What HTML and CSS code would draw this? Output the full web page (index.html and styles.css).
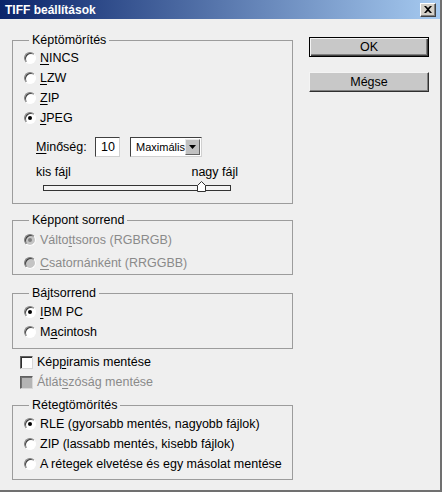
FILE: index.html
```html
<!DOCTYPE html>
<html lang="hu">
<head>
<meta charset="utf-8">
<title>TIFF beállítások</title>
<link rel="stylesheet" href="styles.css">
</head>
<body>
<div class="window">
  <div class="titlebar">
    <span class="title">TIFF beállítások</span>
    <span class="close"><svg width="8" height="7" viewBox="0 0 8 7"><path d="M0 0h2l2 2 2-2h2L5 3.5 8 7H6L4 5 2 7H0l3-3.5z" fill="#000"/></svg></span>
  </div>
  <div class="content">
    <div class="left">
      <fieldset class="group g1">
        <legend>Képtömörítés</legend>
        <div class="row"><span class="radio"></span><span><u>N</u>INCS</span></div>
        <div class="row"><span class="radio"></span><span><u>L</u>ZW</span></div>
        <div class="row"><span class="radio"></span><span><u>Z</u>IP</span></div>
        <div class="row"><span class="radio checked"></span><span><u>J</u>PEG</span></div>
        <div class="quality">
          <span class="qlabel"><u>M</u>inőség:</span>
          <span class="input">10</span>
          <span class="select"><span class="sel-text">Maximális</span><span class="sel-btn"><svg width="7" height="4" viewBox="0 0 7 4"><path d="M0 0h7L3.5 4z" fill="#000"/></svg></span></span>
        </div>
        <div class="scale"><span>kis fájl</span><span>nagy fájl</span></div>
        <div class="slider">
          <div class="track"></div>
          <svg class="thumb" width="9" height="11" viewBox="0 0 9 11"><path d="M0.5 4.5L4.5 0.5 8.5 4.5V10.5H0.5Z" fill="#fff" stroke="#333"/></svg>
        </div>
      </fieldset>

      <fieldset class="group g2 disabled">
        <legend>Képpont sorrend</legend>
        <div class="row tall"><span class="radio checked"></span><span>Válto<u>t</u>tsoros (RGBRGB)</span></div>
        <div class="row tall"><span class="radio"></span><span><u>C</u>satornánként (RRGGBB)</span></div>
      </fieldset>

      <fieldset class="group g3">
        <legend>Bájtsorrend</legend>
        <div class="row"><span class="radio checked"></span><span><u>I</u>BM PC</span></div>
        <div class="row"><span class="radio"></span><span>M<u>a</u>cintosh</span></div>
      </fieldset>

      <div class="checks">
        <div class="row"><span class="check"></span><span>Kép<u>p</u>iramis mentése</span></div>
        <div class="row disabled"><span class="check"></span><span>Átlát<u>s</u>zóság mentése</span></div>
      </div>

      <fieldset class="group g4">
        <legend>Rétegtömörítés</legend>
        <div class="row"><span class="radio checked"></span><span>RLE (gyorsabb mentés, nagyobb fájlok)</span></div>
        <div class="row"><span class="radio"></span><span>ZIP (lassabb mentés, kisebb fájlok)</span></div>
        <div class="row"><span class="radio"></span><span>A rétegek elvetése és egy másolat mentése</span></div>
      </fieldset>
    </div>
    <div class="buttons">
      <span class="btn default">OK</span>
      <span class="btn">Mégse</span>
    </div>
  </div>
</div>
</body>
</html>
```

FILE: styles.css
```css
html, body {
  margin: 0;
  padding: 0;
  background: #efefef;
}
.window {
  width: 442px;
  height: 492px;
  box-sizing: border-box;
  background: #efefef;
  border-right: 2px solid #707070;
  border-bottom: 2px solid #707070;
  font-family: "Liberation Sans", Arial, sans-serif;
  font-size: 12.5px;
  color: #000;
  display: flex;
  flex-direction: column;
}
u { text-decoration: underline; text-underline-offset: 2px; }
.titlebar {
  height: 19px;
  flex: none;
  display: flex;
  align-items: center;
  background: linear-gradient(to right, #0a246a, #a6caf0);
  color: #fff;
}
.title {
  font-weight: bold;
  font-size: 12px;
  margin-left: 5px;
  line-height: 14px;
}
.close {
  margin-left: auto;
  margin-right: 4px;
  width: 16px;
  height: 14px;
  box-sizing: border-box;
  background: #d4d0c8;
  border: 1px solid;
  border-color: #fff #404040 #404040 #fff;
  box-shadow: inset -1px -1px 0 #808080;
  display: flex;
  align-items: center;
  justify-content: center;
}
.close svg { display: block; margin-top: -1px; margin-left: -1px; }
.content {
  display: flex;
  padding: 14px 0 0 12px;
}
.left {
  display: flex;
  flex-direction: column;
  width: 281px;
}
.group {
  margin: 0;
  width: 281px;
  box-sizing: border-box;
  min-inline-size: 0;
  border: 1px solid #9c9c9c;
  padding: 1px 10px 0 11px;
}
.group legend {
  margin-left: 5px;
  padding: 0 3px;
  line-height: 14px;
  height: 14px;
}
.g1 { padding-bottom: 11px; }
.g2 { margin-top: 9px; padding-bottom: 0; }
.g3 { margin-top: 11px; padding-top: 2px; padding-bottom: 6px; }
.g4 { margin-top: 6px; padding-top: 2px; padding-bottom: 5px; }
.row {
  display: flex;
  align-items: center;
  height: 20px;
  gap: 4px;
  white-space: nowrap;
}
.row.tall { height: 23px; }
.radio {
  position: relative;
  width: 12px;
  height: 12px;
  box-sizing: border-box;
  border-radius: 50%;
  border: 1px solid;
  border-color: #808080 #fff #fff #808080;
  background: #fff;
  box-shadow: inset 1px 1px 0 #404040;
  flex: none;
}
.radio.checked::after {
  content: "";
  position: absolute;
  left: 3px;
  top: 3px;
  width: 4px;
  height: 4px;
  border-radius: 50%;
  background: #000;
}
.disabled .row { color: #8a8a8a; }
.disabled .radio { background: #c4c4c4; }
.disabled .radio.checked::after { background: #808080; }
.quality {
  display: flex;
  align-items: center;
  margin-top: 9px;
  padding-left: 12px;
  height: 20px;
}
.qlabel { width: 59px; }
.input {
  width: 25px;
  height: 20px;
  box-sizing: border-box;
  background: #fff;
  border: 1px solid;
  border-color: #404040 #d0d0d0 #d0d0d0 #404040;
  padding-left: 5px;
  line-height: 18px;
}
.select {
  margin-left: 10px;
  width: 72px;
  height: 20px;
  box-sizing: border-box;
  background: #fff;
  border: 1px solid;
  border-color: #404040 #d0d0d0 #d0d0d0 #404040;
  display: flex;
  align-items: center;
}
.sel-text { padding-left: 5px; flex: 1; overflow: hidden; white-space: nowrap; font-size: 11px; }
.sel-btn {
  flex: none;
  width: 15px;
  height: 16px;
  margin-right: 1px;
  box-sizing: border-box;
  background: #c0c0c0;
  border: 1px solid;
  border-color: #e8e8e8 #606060 #606060 #e8e8e8;
  display: flex;
  align-items: center;
  justify-content: center;
}
.sel-btn svg { display: block; }
.scale {
  margin-top: 8px;
  margin-left: 12px;
  width: 202px;
  display: flex;
  justify-content: space-between;
  line-height: 14px;
  height: 14px;
}
.slider {
  position: relative;
  margin-top: 1px;
  margin-left: 19px;
  width: 188px;
  height: 12px;
  box-sizing: border-box;
  padding-top: 5px;
}
.track {
  height: 6px;
  box-sizing: border-box;
  border: 1px solid #333;
  background: #f4f4f4;
}
.thumb {
  position: absolute;
  left: 154px;
  top: 1px;
  display: block;
}
.checks {
  margin-top: 3px;
  padding-left: 8px;
}
.check {
  width: 13px;
  height: 13px;
  box-sizing: border-box;
  border: 1px solid;
  border-color: #606060 #d8d8d8 #d8d8d8 #606060;
  box-shadow: inset 1px 1px 0 #303030;
  background: #fff;
  flex: none;
}
.row.disabled { color: #8a8a8a; }
.row.disabled .check { background: #b4b4b4; box-shadow: inset 1px 1px 0 #707070; }
.buttons {
  margin-left: 16px;
  margin-top: 4px;
  display: flex;
  flex-direction: column;
  gap: 15px;
}
.btn {
  width: 120px;
  height: 20px;
  box-sizing: border-box;
  background: #c8c8c8;
  border: 1px solid;
  border-color: #f4f4f4 #303030 #303030 #f4f4f4;
  box-shadow: inset -1px -1px 0 #808080;
  display: flex;
  align-items: center;
  justify-content: center;
  line-height: 14px;
}
.btn.default {
  border-color: #000;
  box-shadow: inset 1px 1px 0 #f4f4f4, inset -1px -1px 0 #404040, inset -2px -2px 0 #808080;
}
```
